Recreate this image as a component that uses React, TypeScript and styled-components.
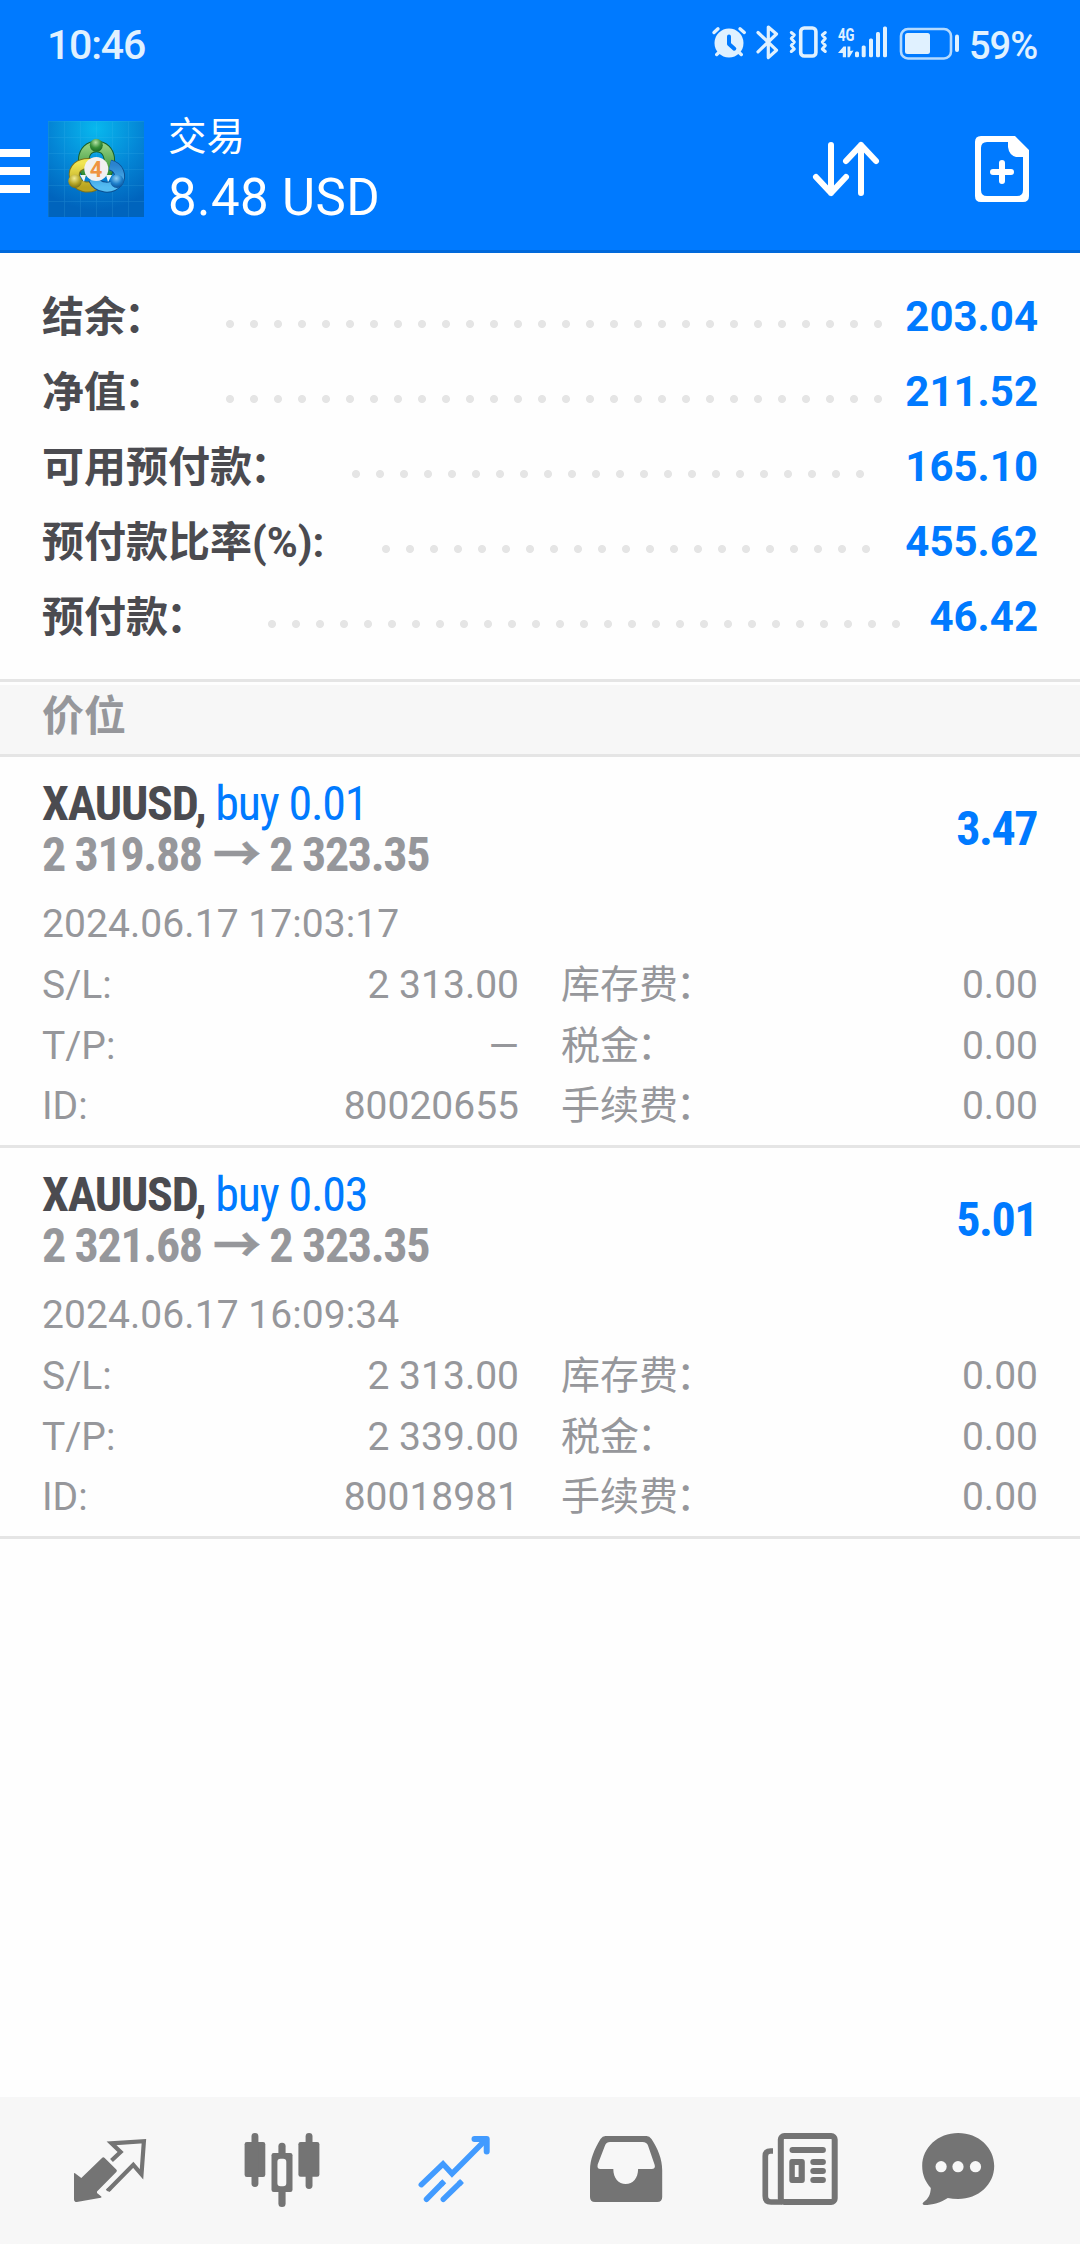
import React from "react";
import styled, { createGlobalStyle } from "styled-components";

const BLUE = "#007aff";
const INK = "#4b4b50";
const MUTED = "#96979b";
const LINE = "#e5e5e5";
const PANEL = "#f7f7f7";
const STATUS = "#e0f1ff";

const GlobalStyle = createGlobalStyle`
  * { box-sizing: border-box; }
  body {
    margin: 0;
    background: #fff;
    font-family: Roboto, "Noto Sans CJK SC", sans-serif;
  }
`;

const Screen = styled.div`
  display: flex;
  flex-direction: column;
  width: 1080px;
  height: 2244px;
  overflow: hidden;
  background: #fefefe;
`;

const Header = styled.header`
  display: flex;
  flex-direction: column;
  height: 253px;
  background: ${BLUE};
  border-bottom: 3px solid #0069db;
`;

const StatusBar = styled.div`
  display: flex;
  justify-content: space-between;
  align-items: flex-start;
  height: 88px;
  padding: 0 42px 0 47px;
  color: ${STATUS};
  font-weight: 500;
`;

const Clock = styled.span`
  padding-top: 21px;
  font-size: 41px;
  line-height: 48px;
  letter-spacing: -1.2px;
`;

const StatusIcons = styled.div`
  display: flex;
  align-items: flex-start;
  padding-top: 25px;

  svg { display: block; flex: none; overflow: visible; }
`;

const BatteryText = styled.span`
  width: 69px;
  margin-top: -3px;
  font-size: 38px;
  line-height: 48px;
  letter-spacing: -1px;
  white-space: nowrap;
`;

const Toolbar = styled.div`
  display: flex;
  align-items: flex-start;
  height: 162px;
`;

const MenuButton = styled.div`
  display: flex;
  flex-direction: column;
  gap: 10px;
  width: 30px;
  margin: 61px 18px 0 0;
`;

const MenuBar = styled.span`
  height: 8px;
  background: #fff;
`;

const Logo = styled.svg`
  display: block;
  margin: 33px 24px 0 0;
`;

const TitleBlock = styled.div`
  flex: 1;
  color: #fff;
  padding-top: 21px;
`;

const Title = styled.div`
  font-size: 38.5px;
  line-height: 56px;
`;

const Balance = styled.div`
  padding-top: 3px;
  font-size: 51px;
  line-height: 60px;
  letter-spacing: 0.4px;
`;

const Actions = styled.div`
  display: flex;
  gap: 88px;
  padding: 45px 50px 0 0;

  svg { display: block; }
`;

const Summary = styled.section`
  height: 426px;
  padding: 26px 42px 0;
`;

const SummaryRow = styled.div`
  display: flex;
  align-items: center;
  height: 75px;
  font-size: 42px;
  line-height: 75px;
  font-weight: 700;
  white-space: nowrap;
`;

const SummaryLabel = styled.span`
  padding-top: 2px;
  color: ${INK};
`;

const Colon = styled.span`
  margin: 0 2px 0 -2px;
`;

const LeaderTrack = styled.span`
  flex: 1;
  margin: 15px 10px 0 50px;
`;

const Leader = styled.span`
  display: block;
  width: round(down, 100%, 24px);
  height: 24px;
  background: radial-gradient(circle at 12px 12px, ${LINE} 3.6px, transparent 4.4px) 0 0 / 24px 24px repeat-x;
`;

const SummaryValue = styled.span`
  color: ${BLUE};
`;

const SectionHead = styled.div`
  height: 78px;
  padding: 3px 0 0;
  border-top: 3px solid ${LINE};
  border-bottom: 3px solid ${LINE};
`;

const SectionTitle = styled.div`
  height: 69px;
  padding-left: 42px;
  background: ${PANEL};
  color: ${MUTED};
  font-size: 42px;
  font-weight: 700;
  line-height: 64px;
`;

const Position = styled.article`
  height: 391px;
  padding: 21px 42px 0;
  border-bottom: 3px solid ${LINE};
`;

const PositionTop = styled.div`
  display: flex;
  justify-content: space-between;
  align-items: center;
  height: 102px;
  font-family: "Roboto Condensed", Roboto, "Noto Sans CJK SC", sans-serif;
  font-stretch: 75%;
  font-size: 48px;
  line-height: 51px;
  font-weight: 700;
  white-space: nowrap;
`;

const Instrument = styled.div`
  color: ${INK};
  letter-spacing: -1.2px;
`;

const Side = styled.span`
  color: ${BLUE};
  font-weight: 400;
`;

const Prices = styled.div`
  color: ${MUTED};
  letter-spacing: -1.35px;
`;

const Arrow = styled.span`
  margin-left: 1.5px;
  -webkit-text-stroke: 0.6px ${MUTED};
`;

const Profit = styled.div`
  padding: 0 1px 2px 0;
  color: ${BLUE};
  letter-spacing: -1.5px;
`;

const Opened = styled.div`
  padding-top: 14px;
  color: ${MUTED};
  font-size: 39px;
  line-height: 61px;
  letter-spacing: 0.07px;
`;

const Details = styled.div`
  display: grid;
  grid-template-columns: 1fr 1fr;
  grid-auto-rows: 60.5px;
  column-gap: 42px;
  color: ${MUTED};
  font-size: 39px;
  line-height: 60px;
`;

const Detail = styled.div`
  display: flex;
  justify-content: space-between;
  white-space: nowrap;
`;

const Spacer = styled.div`
  flex: 1;
`;

const TabBar = styled.nav`
  display: grid;
  grid-template-columns: 172px 171px 173px 172px 175px 142px;
  height: 147px;
  padding: 25px 24px 0;
  justify-items: center;
  background: ${PANEL};
`;

const Tab = styled.svg<{ $active?: boolean }>`
  display: block;
  width: 96px;
  height: 96px;
  color: ${(p) => (p.$active ? "#429bff" : "#747474")};
`;

const summary = [
  ["结余：", "203.04"],
  ["净值：", "211.52"],
  ["可用预付款：", "165.10"],
  ["预付款比率(%):", "455.62"],
  ["预付款：", "46.42"],
];

const positions = [
  {
    symbol: "XAUUSD", side: "buy 0.01", open: "2 319.88", now: "2 323.35", profit: "3.47",
    time: "2024.06.17 17:03:17", sl: "2 313.00", tp: "—", id: "80020655",
  },
  {
    symbol: "XAUUSD", side: "buy 0.03", open: "2 321.68", now: "2 323.35", profit: "5.01",
    time: "2024.06.17 16:09:34", sl: "2 313.00", tp: "2 339.00", id: "80018981",
  },
];

/* Full-width colons sit tight against the last character of the label. */
function Label({ text }: { text: string }) {
  if (!text.endsWith("：")) return <span>{text}</span>;
  return (
    <span>
      {text.slice(0, -1)}
      <Colon>：</Colon>
    </span>
  );
}

function AppLogo() {
  const grid = [0, 16, 32, 48, 64, 80, 96];
  return (
    <Logo width="96" height="96" viewBox="0 0 96 96">
      <defs>
        <radialGradient id="sky" cx="50%" cy="8%" r="85%">
          <stop offset="0" stopColor="#08b8ee" />
          <stop offset="0.55" stopColor="#0486d6" />
          <stop offset="1" stopColor="#0064bd" />
        </radialGradient>
        <linearGradient id="green" x1="0" y1="0" x2="0" y2="1">
          <stop offset="0" stopColor="#8fce7c" />
          <stop offset="1" stopColor="#2e8b33" />
        </linearGradient>
        <linearGradient id="yellow" x1="0" y1="0" x2="0" y2="1">
          <stop offset="0" stopColor="#f1e552" />
          <stop offset="1" stopColor="#b9a420" />
        </linearGradient>
        <linearGradient id="blue" x1="0" y1="0" x2="0" y2="1">
          <stop offset="0" stopColor="#2a83cf" />
          <stop offset="1" stopColor="#55bdf2" />
        </linearGradient>
        <radialGradient id="gBall" cx="45%" cy="28%" r="70%">
          <stop offset="0" stopColor="#b5e3a4" />
          <stop offset="0.6" stopColor="#358f38" />
          <stop offset="1" stopColor="#1c6a26" />
        </radialGradient>
        <radialGradient id="yBall" cx="45%" cy="28%" r="70%">
          <stop offset="0" stopColor="#f3ec92" />
          <stop offset="0.6" stopColor="#b5a526" />
          <stop offset="1" stopColor="#7d7318" />
        </radialGradient>
        <radialGradient id="bBall" cx="45%" cy="28%" r="70%">
          <stop offset="0" stopColor="#8fd0f6" />
          <stop offset="0.6" stopColor="#1d7fcb" />
          <stop offset="1" stopColor="#0d549c" />
        </radialGradient>
      </defs>
      <rect width="96" height="96" fill="url(#sky)" />
      <g stroke="#5cc8f5" strokeWidth="0.7" opacity="0.2">
        {grid.map((g) => (
          <path key={g} d={`M${g + 0.5} 0V96M0 ${g + 0.5}H96`} />
        ))}
      </g>
      <g fill="none">
        <path d="M40 54C33 46 33 25.500 48.500 25.500S64 46 57 54" stroke="#175f2c" strokeWidth="11.500" />
        <path d="M40 54C33 46 33 25.500 48.500 25.500S64 46 57 54" stroke="url(#green)" strokeWidth="9.500" />
        <path d="M43 42.500C31 41.500 25 48 26.500 56C28 66 42 70 51 61" stroke="#7c721c" strokeWidth="11" />
        <path d="M43 42.500C31 41.500 25 48 26.500 56C28 66 42 70 51 61" stroke="url(#yellow)" strokeWidth="9" />
        <path d="M62 44C71 46 74 55 69.500 61C64 68.500 50 68 45.500 58" stroke="#0c4f91" strokeWidth="11" />
        <path d="M62 44C71 46 74 55 69.500 61C64 68.500 50 68 45.500 58" stroke="url(#blue)" strokeWidth="9" />
      </g>
      <path d="M32 54l6 0 -2 7zM64 54l-6 0 2 7z" fill="#eef7fb" />
      <circle cx="48.300" cy="24.300" r="6.500" fill="url(#gBall)" />
      <circle cx="27" cy="60.300" r="6.700" fill="url(#yBall)" />
      <circle cx="69" cy="60.300" r="6.700" fill="url(#bBall)" />
      <circle cx="48.300" cy="48" r="12" fill="#f1f0f1" />
      <text x="48" y="55.800" fontSize="22" fontWeight="700" fontFamily="Roboto, sans-serif" textAnchor="middle" fill="#ef9340">4</text>
    </Logo>
  );
}

function StatusGlyphs() {
  return (
    <>
      <svg width="45" height="36" fill="none" stroke={STATUS} strokeLinecap="round" strokeLinejoin="round">
        <circle cx="19" cy="18" r="14.500" fill={STATUS} stroke="none" />
        <path d="M4 7.500L8 3.800M30 3.800L34.300 7.500M6.700 29.500L10 26.500M31.300 29.500L28 26.500" strokeWidth="3.400" />
        <path d="M19 11.500V19L24.300 23.700" stroke={BLUE} strokeWidth="4" />
      </svg>
      <svg width="32" height="36" fill="none" stroke={STATUS} strokeWidth="3.200" strokeLinecap="round" strokeLinejoin="round">
        <path d="M3 7.500L21.500 25.200L13.300 32.600V2L21.500 9L3 26.800" />
      </svg>
      <svg width="51" height="36" fill="none" stroke={STATUS} strokeWidth="3" strokeLinecap="round" strokeLinejoin="round">
        <rect x="13.700" y="3" width="15.200" height="28" rx="3.500" strokeWidth="3.600" />
        <path d="M4.300 7.500L7.300 10L4.300 13.500L7.300 17L4.300 20.500L7.300 24L4.300 26.500M38.300 7.500L35.300 10L38.300 13.500L35.300 17L38.300 20.500L35.300 24L38.300 26.500" />
      </svg>
      <svg width="60" height="36" fill={STATUS}>
        <text x="0" y="15.700" fontSize="19" fontWeight="700" fontFamily="Roboto, sans-serif" textLength="16.500" lengthAdjust="spacingAndGlyphs">4G</text>
        <path d="M4.800 32.300V28H0L5.500 21.500H8V32.300zM9.500 21.500H12.300V26L15.500 25.500L11.500 32.300H9.500z" />
        <rect x="17" y="26.500" width="4" height="5.800" rx="1.500" />
        <rect x="23.700" y="20.500" width="4" height="11.800" rx="1.500" />
        <rect x="31" y="13.500" width="4" height="18.800" rx="1.500" />
        <rect x="38" y="7" width="4" height="25.300" rx="1.500" />
        <rect x="45" y="1.500" width="4" height="30.800" rx="1.500" />
      </svg>
      <svg width="71" height="36" fill={STATUS}>
        <rect x="3" y="4" width="50" height="29.500" rx="7" fill="none" stroke="#b4daff" strokeWidth="2.600" />
        <rect x="7" y="8" width="25" height="21" rx="2.500" />
        <rect x="57" y="9.500" width="4" height="17.500" rx="2" />
      </svg>
    </>
  );
}

function TabIcons() {
  return (
    <>
      <Tab viewBox="0 0 96 96">
        <path fill="currentColor" d="M12 51.500Q12 50.500 13 51.200L19.300 56L40 36Q41.300 34.600 42.700 36L54.300 47.500Q55.600 48.700 54.300 50L35 69.500V71L39.300 74.500Q40 75.500 38.800 75.800L14.800 80Q12 80 12 77.200z" />
        <path fill="none" stroke="currentColor" strokeWidth="4.200" d="M49.500 38.500L58.600 30L49.500 21.300L81.900 19.200L79.500 52.300L71.300 42.800L46 68.500" />
        <path fill="currentColor" d="M43.800 67.500L47.500 65L49.500 68Q46 71 43.800 67.500z" />
      </Tab>
      <Tab viewBox="0 0 96 96">
        <g fill="currentColor">
          <rect x="10.600" y="20" width="20.700" height="35" rx="2.200" />
          <rect x="17.500" y="11" width="6.900" height="54" rx="3.400" />
          <rect x="64.400" y="20" width="21" height="34.700" rx="2.200" />
          <rect x="71.600" y="11" width="6.900" height="56" rx="3.400" />
          <rect x="44.400" y="20.700" width="7.200" height="64.300" rx="3.500" />
          <rect x="37.500" y="31" width="21" height="39" rx="2.200" />
        </g>
        <rect x="43.400" y="36.800" width="8.900" height="27.500" rx="3.200" fill={PANEL} />
      </Tab>
      <Tab $active viewBox="0 0 96 96">
        <g fill="none" stroke="currentColor" strokeWidth="5.500" strokeLinecap="round" strokeLinejoin="round">
          <path strokeLinejoin="miter" d="M15.300 62.700L37 42L46 51.700L80 17.500" />
          <path d="M68.500 17H80.700V29.500" strokeWidth="6" />
          <path d="M20.500 77.300L36 61.500M37.300 77.300L54 61" />
        </g>
        <path stroke="currentColor" strokeWidth="5.500" d="M35 62.500L38.300 59.200M53 62L56 59" />
      </Tab>
      <Tab viewBox="0 0 96 96">
        <path
          fill="currentColor"
          fillRule="evenodd"
          d="M27.500 14H68.500Q71.500 14 73.500 17C80 27 84.200 37 84.200 48V75Q84.200 80 79.200 80H17Q12 80 12 75V48C12 37 16.500 27 22.500 17Q24.500 14 27.500 14zM32 20Q28.500 20 27.200 23L19.700 42.500Q18.700 47 22.500 47H35.300C35.300 56 40.500 62 47.700 62S60.100 56 60.100 47H73.500Q77.700 47 76.700 43L70 23.500Q68.800 20 64.500 20z"
        />
      </Tab>
      <Tab viewBox="0 0 96 96">
        <g fill="none" stroke="currentColor" strokeWidth="6">
          <rect x="28.800" y="14" width="53.900" height="66" rx="3.500" />
          <path d="M21 29H18.500Q13.300 29 13.300 34V74Q13.300 80 19 80H30" strokeWidth="5.700" />
        </g>
        <g fill="currentColor">
          <rect x="37.500" y="25" width="36.400" height="6" rx="3" />
          <path fillRule="evenodd" d="M40 37H50Q52.800 37 52.800 40V58Q52.800 61 50 61H40Q37.300 61 37.300 58V40Q37.300 37 40 37zM42.800 43V55H46.600V43z" />
          <rect x="58.300" y="37" width="15.600" height="6" rx="3" />
          <rect x="58.300" y="46" width="15.600" height="6" rx="3" />
          <rect x="58.300" y="55" width="15.600" height="6" rx="3" />
        </g>
      </Tab>
      <Tab viewBox="0 0 96 96">
        <path fill="currentColor" d="M48.200 11C68.500 11 84.200 25.500 84.200 44S68.500 77 48.200 77Q42.500 77 37.800 76C31 80.500 23 83 14 83Q11.500 82 13.500 80.300C18.500 76.500 20.500 72.500 20.800 66C15.500 60 12.200 53 12.200 44C12.200 25.500 28 11 48.200 11z" />
        <g fill={PANEL}>
          <circle cx="31.100" cy="44.700" r="5.600" />
          <circle cx="48" cy="44.700" r="5.600" />
          <circle cx="65.500" cy="44.700" r="5.600" />
        </g>
      </Tab>
    </>
  );
}

export default function App() {
  return (
    <Screen>
      <GlobalStyle />
      <Header>
        <StatusBar>
          <Clock>10:46</Clock>
          <StatusIcons>
            <StatusGlyphs />
            <BatteryText>59%</BatteryText>
          </StatusIcons>
        </StatusBar>
        <Toolbar>
          <MenuButton>
            <MenuBar />
            <MenuBar />
            <MenuBar />
          </MenuButton>
          <AppLogo />
          <TitleBlock>
            <Title>交易</Title>
            <Balance>8.48 USD</Balance>
          </TitleBlock>
          <Actions>
            <svg width="72" height="72" fill="none" stroke="#fff" strokeWidth="6" strokeLinecap="round" strokeLinejoin="round">
              <path d="M21 12V60M6 44L21 60L36 44M51 60V12M36 28L51 12L66 28" />
            </svg>
            <svg width="60" height="72">
              <path
                fill="#fff"
                fillRule="evenodd"
                d="M11 3H45L59 17V63Q59 69 53 69H11Q5 69 5 63V9Q5 3 11 3zM17 9Q11 9 11 15V57Q11 63 17 63H47Q53 63 53 57V24H46Q39 22 38 14V9z"
              />
              <path d="M32 30V48M23 39H41" stroke="#fff" strokeWidth="6" strokeLinecap="round" />
            </svg>
          </Actions>
        </Toolbar>
      </Header>

      <Summary>
        {summary.map(([label, value]) => (
          <SummaryRow key={label}>
            <SummaryLabel><Label text={label} /></SummaryLabel>
            <LeaderTrack>
              <Leader />
            </LeaderTrack>
            <SummaryValue>{value}</SummaryValue>
          </SummaryRow>
        ))}
      </Summary>

      <SectionHead>
        <SectionTitle>价位</SectionTitle>
      </SectionHead>

      {positions.map((p) => (
        <Position key={p.id}>
          <PositionTop>
            <div>
              <Instrument>
                {p.symbol}, <Side>{p.side}</Side>
              </Instrument>
              <Prices>
                {p.open} <Arrow>→</Arrow> {p.now}
              </Prices>
            </div>
            <Profit>{p.profit}</Profit>
          </PositionTop>
          <Opened>{p.time}</Opened>
          <Details>
            <Detail><span>S/L:</span><span>{p.sl}</span></Detail>
            <Detail><Label text="库存费：" /><span>0.00</span></Detail>
            <Detail><span>T/P:</span><span>{p.tp}</span></Detail>
            <Detail><Label text="税金：" /><span>0.00</span></Detail>
            <Detail><span>ID:</span><span>{p.id}</span></Detail>
            <Detail><Label text="手续费：" /><span>0.00</span></Detail>
          </Details>
        </Position>
      ))}

      <Spacer />
      <TabBar>
        <TabIcons />
      </TabBar>
    </Screen>
  );
}
